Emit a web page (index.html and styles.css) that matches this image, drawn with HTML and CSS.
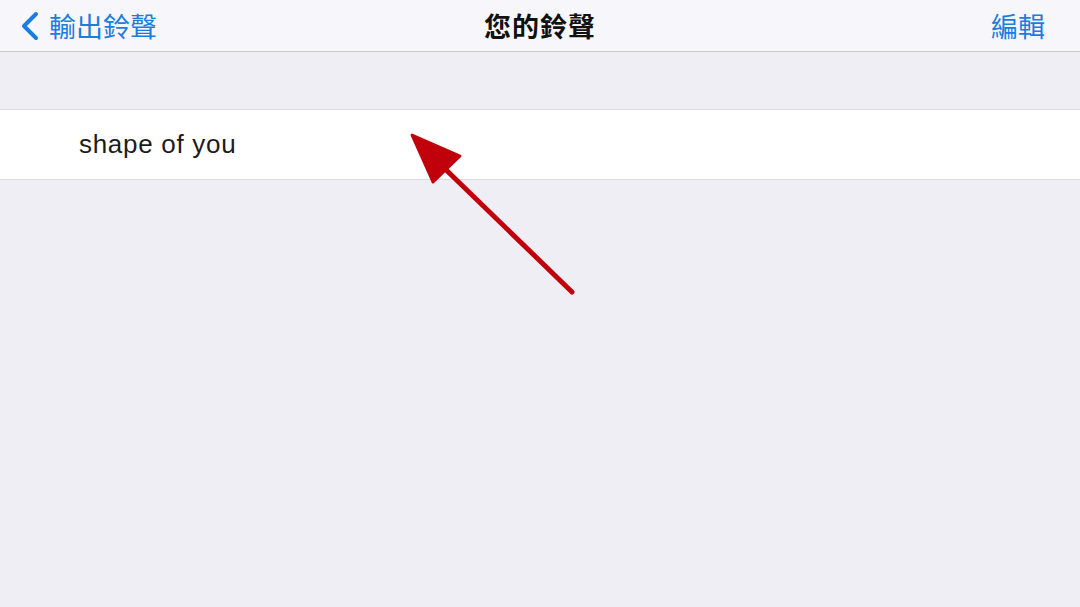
FILE: index.html
```html
<!DOCTYPE html>
<html lang="zh-Hant">
<head>
    <meta charset="UTF-8">
    <title>您的鈴聲</title>
    <link rel="stylesheet" href="styles.css">
</head>
<body>
    <div class="navbar">
        <div class="nav-back">
            <svg class="chevron" width="22" height="30" viewBox="0 0 22 30">
                <path d="M17 3 L5 15 L17 27" fill="none" stroke="#1a7de0" stroke-width="4" stroke-linecap="round" stroke-linejoin="round"/>
            </svg>
            <span>輸出鈴聲</span>
        </div>
        <div class="nav-title">您的鈴聲</div>
        <div class="nav-edit">編輯</div>
    </div>

    <div class="content">
        <ul class="list">
            <li>shape of you</li>
        </ul>
    </div>

    <svg class="annotation" width="1080" height="607" viewBox="0 0 1080 607">
        <line x1="440" y1="164" x2="572" y2="292" stroke="#c0000a" stroke-width="5" stroke-linecap="round"/>
        <polygon points="412,135 460,156 433,182" fill="#c0000a" stroke="#c0000a" stroke-width="3" stroke-linejoin="round"/>
    </svg>
</body>
</html>
```

FILE: styles.css
```css
body {
    margin: 0;
    background-color: #efeef4;
    font-family: "Noto Sans CJK TC", "Noto Sans", sans-serif;
    width: 1080px;
    height: 607px;
    overflow: hidden;
    position: relative;
}

.navbar {
    height: 51px;
    background-color: #f7f6fa;
    border-bottom: 1px solid #c9c8cd;
    display: grid;
    grid-template-columns: 1fr auto 1fr;
    align-items: center;
    font-size: 27px;
}

.nav-back {
    display: flex;
    align-items: center;
    gap: 8px;
    padding-left: 19px;
    color: #1a7de0;
}

.nav-title {
    color: #111;
    font-weight: 700;
    letter-spacing: 1px;
}

.nav-edit {
    justify-self: end;
    padding-right: 35px;
    color: #1a7de0;
}

.content {
    padding-top: 57px;
}

.list {
    list-style: none;
    margin: 0;
    padding: 0;
    background: white;
    border-top: 1px solid #dddce1;
    border-bottom: 1px solid #dddce1;
}

.list li {
    height: 69px;
    display: flex;
    align-items: center;
    padding-left: 79px;
    font-family: "Liberation Sans", "Noto Sans", sans-serif;
    font-size: 26px;
    letter-spacing: 0.7px;
    color: #1c1c1c;
}

.annotation {
    position: absolute;
    top: 0;
    left: 0;
    pointer-events: none;
}
```
